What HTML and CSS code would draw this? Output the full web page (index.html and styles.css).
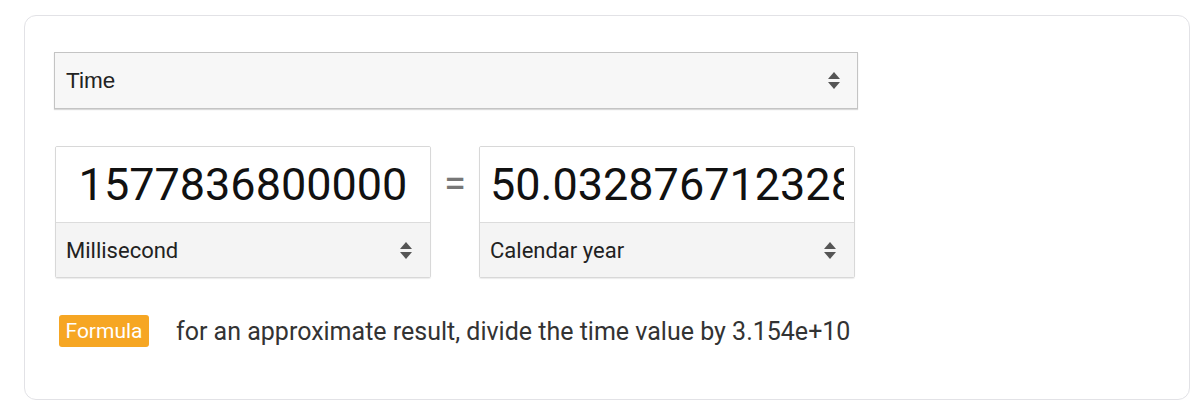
FILE: index.html
```html
<!DOCTYPE html>
<html>
<head>
<meta charset="utf-8">
<link rel="stylesheet" href="styles.css">
</head>
<body>
<div class="card">
  <div class="select select-top">
    <span class="select-label">Time</span>
    <span class="arrows"><i class="up"></i><i class="down"></i></span>
  </div>
  <div class="convert-row">
    <div class="box">
      <input class="value" type="text" value="1577836800000">
      <div class="unit">
        <span>Millisecond</span>
        <span class="arrows"><i class="up"></i><i class="down"></i></span>
      </div>
    </div>
    <div class="equals">=</div>
    <div class="box">
      <input class="value" type="text" value="50.032876712328766">
      <div class="unit">
        <span>Calendar year</span>
        <span class="arrows"><i class="up"></i><i class="down"></i></span>
      </div>
    </div>
  </div>
  <div class="formula-row">
    <span class="badge">Formula</span>
    <span class="formula-text">for an approximate result, divide the time value by 3.154e+10</span>
  </div>
</div>
</body>
</html>
```
FILE: styles.css
```css
html, body {
  margin: 0;
  padding: 0;
  background: #fff;
}
body {
  font-family: Roboto, "Liberation Sans", Arial, sans-serif;
  color: #222;
}
.card {
  margin: 15px 0 0 24px;
  border: 1px solid #e2e2e6;
  border-radius: 12px;
  padding: 36px 0 0 29px;
  box-sizing: border-box;
  height: 385px;
  width: 1166px;
}
.select {
  display: flex;
  align-items: center;
  justify-content: space-between;
  box-sizing: border-box;
}
.select-top {
  width: 804px;
  height: 57px;
  background: #f7f7f7;
  border: 1px solid #c4c4c4;
  box-shadow: 0 1px 1px rgba(0,0,0,0.15);
  padding: 0 17px 0 11px;
}
.select-label {
  font-family: "Liberation Sans", Arial, sans-serif;
  font-size: 22.5px;
  color: #222;
}
.arrows {
  display: flex;
  flex-direction: column;
  align-items: center;
  gap: 3px;
}
.arrows i {
  display: block;
  width: 0;
  height: 0;
  border-left: 6px solid transparent;
  border-right: 6px solid transparent;
}
.arrows .up {
  border-bottom: 7px solid #555;
}
.arrows .down {
  border-top: 7px solid #555;
}
.convert-row {
  display: flex;
  align-items: flex-start;
  margin-top: 37px;
  margin-left: 1px;
}
.box {
  width: 376px;
  height: 132px;
  box-sizing: border-box;
  border: 1px solid #d8d8d8;
  border-radius: 2px;
  box-shadow: 0 1px 1px rgba(0,0,0,0.08);
  display: flex;
  flex-direction: column;
  overflow: hidden;
}
.value {
  height: 76px;
  border: none;
  border-bottom: 1px solid #dcdcdc;
  outline: none;
  background: #fff;
  font-family: Roboto, sans-serif;
  font-size: 45px;
  color: #111;
  text-align: center;
  padding: 0 10px;
  margin: 0;
  width: 100%;
  box-sizing: border-box;
}
.unit {
  flex: 1;
  background: #f4f4f4;
  display: flex;
  align-items: center;
  justify-content: space-between;
  padding: 0 18px 0 10px;
  font-size: 22px;
  color: #222;
}
.equals {
  width: 48px;
  text-align: center;
  font-size: 40px;
  color: #777;
  line-height: 76px;
}
.formula-row {
  display: flex;
  align-items: center;
  margin-top: 37px;
  margin-left: 5px;
}
.badge {
  background: #f6a623;
  color: #fff;
  font-size: 21px;
  height: 32px;
  width: 90px;
  box-sizing: border-box;
  border-radius: 3px;
  display: flex;
  align-items: center;
  justify-content: center;
}
.formula-text {
  margin-left: 27px;
  font-size: 25px;
  color: #333;
}
```
